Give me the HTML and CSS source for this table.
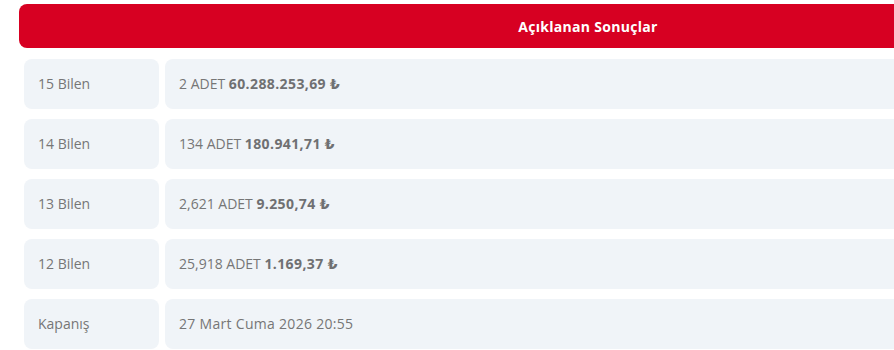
FILE: index.html
```html
<!DOCTYPE html>
<html lang="tr">
<head>
<meta charset="utf-8">
<link rel="stylesheet" href="styles.css">
</head>
<body>
<div class="results">
  <div class="results-head">Açıklanan Sonuçlar</div>
  <div class="results-grid">
    <div class="cell label">15 Bilen</div>
    <div class="cell value">2 ADET <b>60.288.253,69 ₺</b></div>
    <div class="cell label">14 Bilen</div>
    <div class="cell value">134 ADET <b>180.941,71 ₺</b></div>
    <div class="cell label">13 Bilen</div>
    <div class="cell value">2,621 ADET <b>9.250,74 ₺</b></div>
    <div class="cell label">12 Bilen</div>
    <div class="cell value">25,918 ADET <b>1.169,37 ₺</b></div>
    <div class="cell label">Kapanış</div>
    <div class="cell value date">27 Mart Cuma 2026 20:55</div>
  </div>
</div>
</body>
</html>
```
FILE: styles.css
```css
html, body {
  margin: 0;
  padding: 0;
  overflow: hidden;
  background: #fff;
}
body {
  font-family: "Open Sans", "DejaVu Sans", sans-serif;
  font-size: 14px;
  color: #767676;
}
.results {
  width: 1138px;
  padding: 4px 0 0 19px;
}
.results-head {
  height: 44px;
  background: #d70022;
  border-radius: 8px;
  color: #fff;
  font-weight: 700;
  font-size: 14px;
  letter-spacing: 0.3px;
  display: flex;
  align-items: center;
  justify-content: center;
}
.results-grid {
  margin-top: 11px;
  padding: 0 5px;
  display: grid;
  grid-template-columns: 135px 1fr;
  gap: 10px 6px;
}
.cell {
  height: 50px;
  background: #f0f4f8;
  border-radius: 8px;
  padding-left: 14px;
  padding-bottom: 1px;
  box-sizing: border-box;
  display: flex;
  align-items: center;
  white-space: pre;
}
.cell b {
  font-weight: 700;
  color: #6f7072;
  letter-spacing: 0.4px;
}
.date {
  letter-spacing: 0.3px;
}
```
